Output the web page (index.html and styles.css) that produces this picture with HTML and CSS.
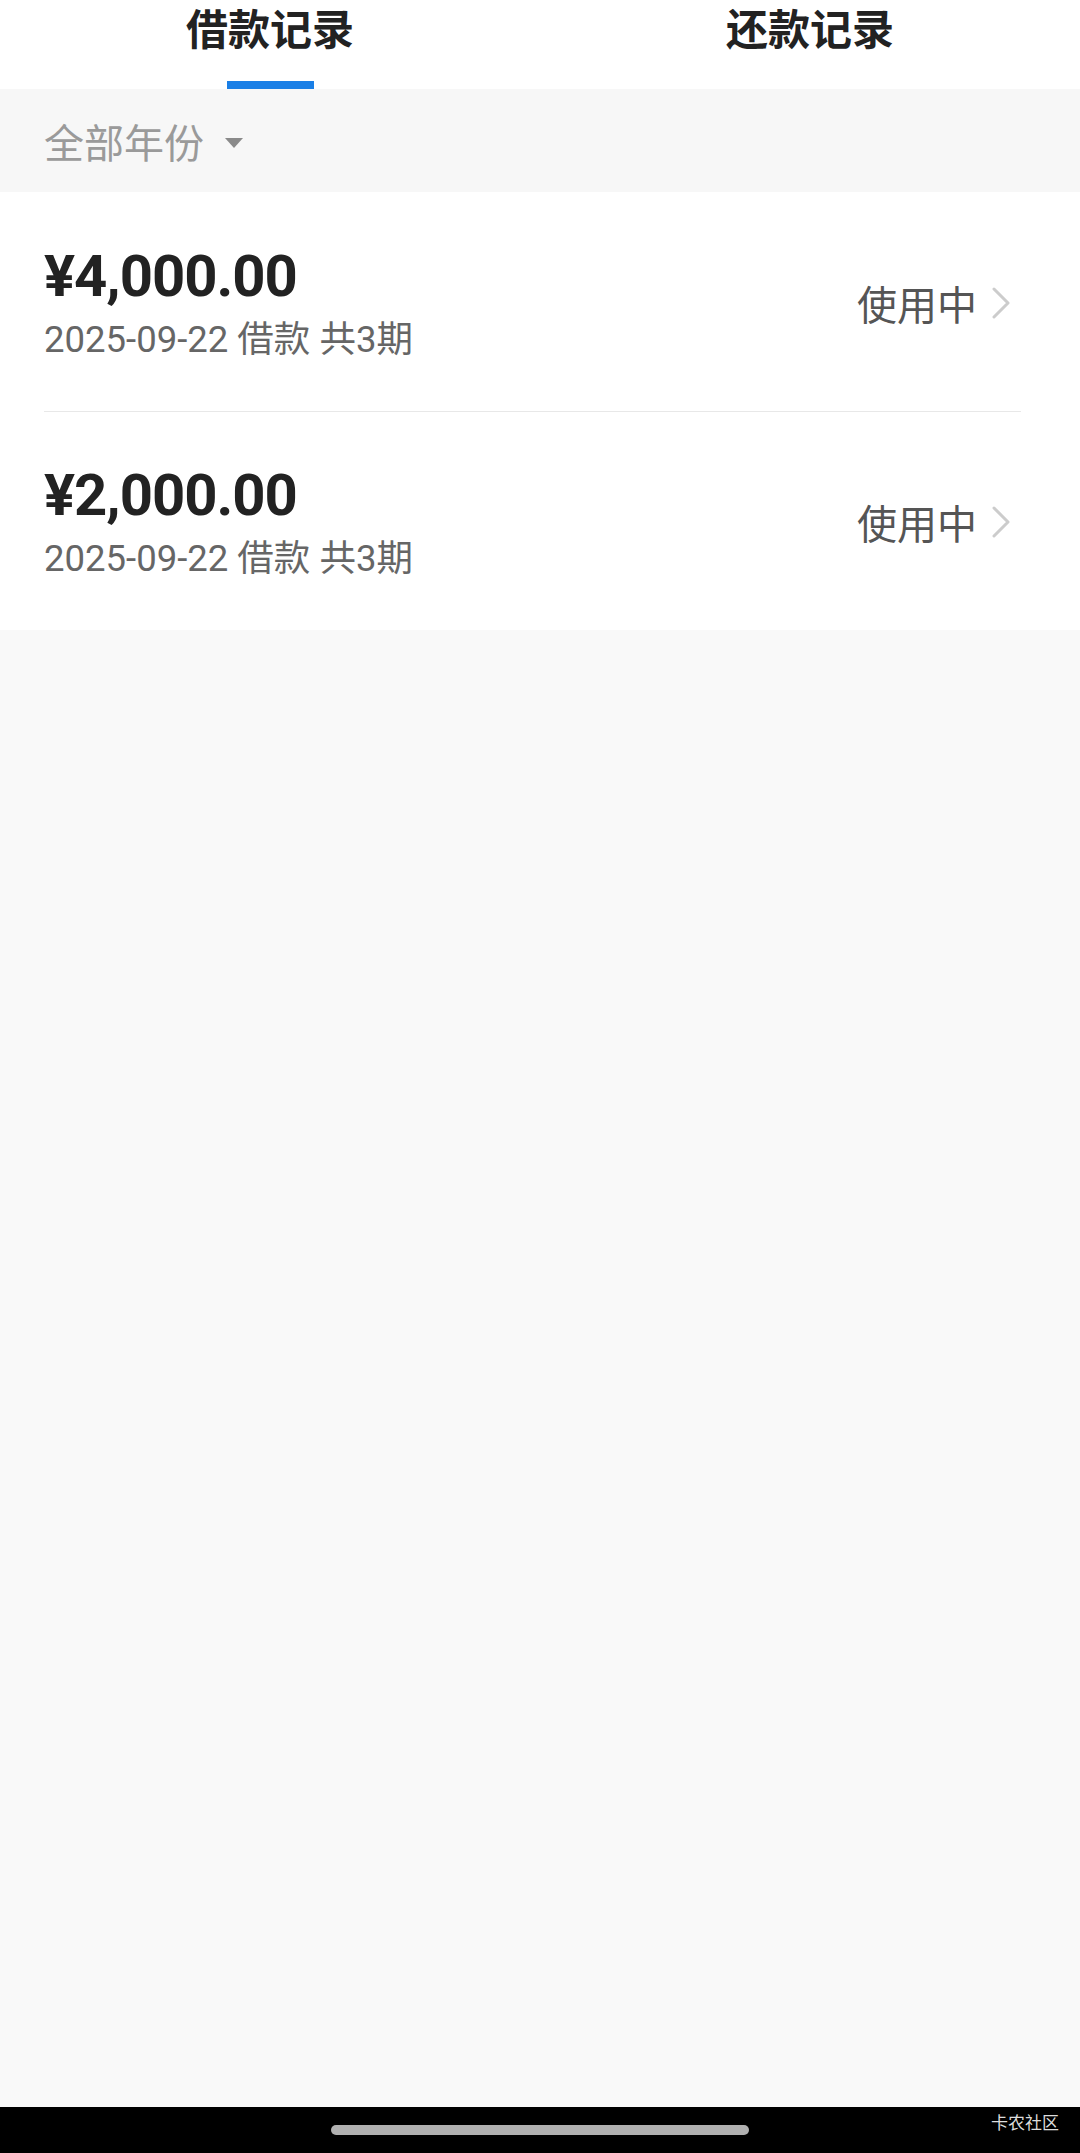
FILE: index.html
```html
<!DOCTYPE html>
<html lang="zh-CN">
  <head>
    <meta charset="UTF-8" />
    <meta name="viewport" content="width=device-width, initial-scale=1.0" />
    <title>借款记录</title>
    <link rel="stylesheet" href="styles.css">
  </head>
  <body>
    <div id="page">
      <!-- tabs -->
      <div class="tabs">
        <div class="tab active">
          <span class="tab-text">借款记录</span>
          <span class="tab-line"></span>
        </div>
        <div class="tab">
          <span class="tab-text">还款记录</span>
          <span class="tab-line"></span>
        </div>
      </div>

      <!-- year filter -->
      <div class="filter">
        <span class="filter-text">全部年份</span>
        <span class="filter-arrow"></span>
      </div>

      <!-- loan list -->
      <div class="list">
        <div class="row">
          <div class="info">
            <div class="amount">¥4,000.00</div>
            <div class="sub">2025-09-22 借款 共3期</div>
          </div>
          <div class="status">
            <span>使用中</span>
            <svg class="chevron" width="20" height="32" viewBox="0 0 20 32">
              <polyline points="3,2 17,16 3,30" fill="none" stroke="#cccccc" stroke-width="3" stroke-linecap="round" stroke-linejoin="round" />
            </svg>
          </div>
        </div>
        <div class="row">
          <div class="info">
            <div class="amount">¥2,000.00</div>
            <div class="sub">2025-09-22 借款 共3期</div>
          </div>
          <div class="status">
            <span>使用中</span>
            <svg class="chevron" width="20" height="32" viewBox="0 0 20 32">
              <polyline points="3,2 17,16 3,30" fill="none" stroke="#cccccc" stroke-width="3" stroke-linecap="round" stroke-linejoin="round" />
            </svg>
          </div>
        </div>
      </div>

      <div class="filler"></div>

      <!-- system bar -->
      <div class="navbar">
        <span class="home-bar"></span>
        <span class="mark">卡农社区</span>
      </div>
    </div>
  </body>
</html>
```

FILE: styles.css
```css
body {
  font-family: Roboto, "Noto Sans CJK SC", sans-serif;
  margin: 0;
  padding: 0;
  background-color: #f9f9f9;
}

#page {
  display: flex;
  flex-direction: column;
  min-height: 100vh;
}

/* tabs */
.tabs {
  display: flex;
  height: 89px;
  background-color: #ffffff;
}

.tab {
  flex: 1;
  display: flex;
  flex-direction: column;
  align-items: center;
}

.tab-text {
  font-family: "Noto Sans CJK SC", sans-serif;
  font-size: 42px;
  font-weight: bold;
  line-height: 54px;
  color: #222222;
}

.tab-line {
  margin-top: 27px;
  width: 87px;
  height: 8px;
  background-color: transparent;
}

.tab.active .tab-line {
  background-color: #1a7fe6;
}

/* filter */
.filter {
  display: flex;
  align-items: center;
  height: 103px;
  padding-left: 44px;
  background-color: #f7f7f7;
}

.filter-text {
  font-family: "Noto Sans CJK SC", sans-serif;
  font-size: 40px;
  color: #9a9a9a;
}

.filter-arrow {
  margin-left: 21px;
  margin-top: 4px;
  width: 0;
  height: 0;
  border-left: 9px solid transparent;
  border-right: 9px solid transparent;
  border-top: 10px solid #8a8a8a;
}

/* list */
.list {
  background-color: #ffffff;
}

.row {
  display: flex;
  align-items: center;
  justify-content: space-between;
  box-sizing: border-box;
  height: 219px;
  margin: 0 59px 0 44px;
  padding-top: 2px;
}

.row + .row {
  border-top: 1px solid #e8e8e8;
}

.amount {
  font-size: 58px;
  font-weight: bold;
  line-height: 58px;
  letter-spacing: -1px;
  color: #222222;
}

.sub {
  margin-top: 16px;
  font-size: 36.5px;
  line-height: 38px;
  color: #666666;
}

.status {
  display: flex;
  align-items: center;
  gap: 14px;
  padding-right: 10px;
  font-family: "Noto Sans CJK SC", sans-serif;
  font-size: 40px;
  color: #555555;
}

.chevron {
  display: block;
}

.filler {
  flex: 1;
}

/* bottom system bar */
.navbar {
  position: relative;
  height: 46px;
  background-color: #000000;
  display: flex;
  justify-content: center;
  align-items: center;
}

.home-bar {
  width: 418px;
  height: 10px;
  border-radius: 5px;
  background-color: #b0b0b0;
}

.mark {
  position: absolute;
  right: 21px;
  top: 2px;
  font-family: "Noto Sans CJK SC", sans-serif;
  font-size: 17px;
  color: #dddddd;
}
```
